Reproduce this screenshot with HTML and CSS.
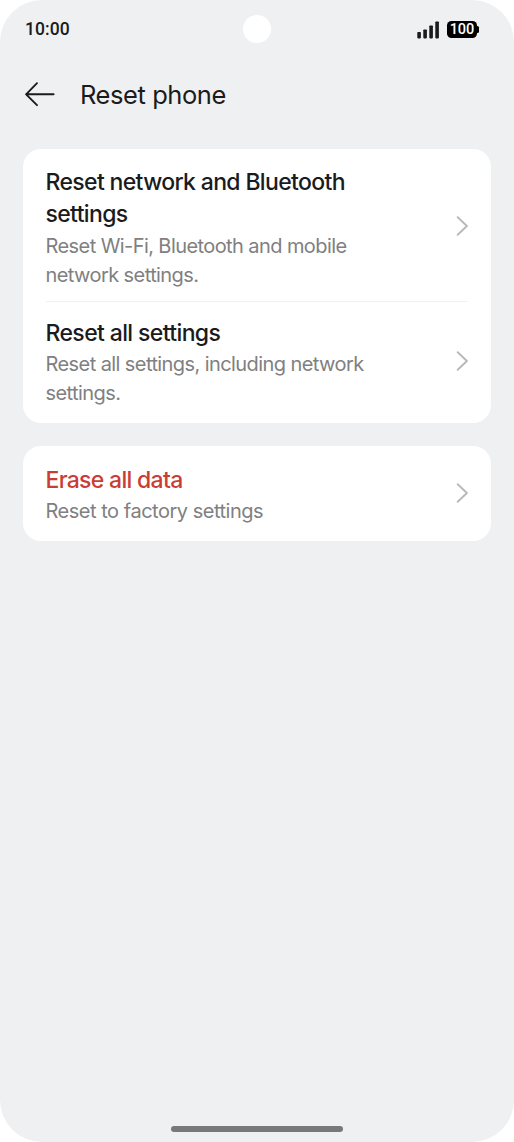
FILE: index.html
```html
<!DOCTYPE html>
<html lang="en">
<head>
<meta charset="utf-8">
<title>Reset phone</title>
<link rel="stylesheet" href="styles.css">
</head>
<body>
<div class="phone">
  <div class="status">
    <span class="time">10:00</span>
    <span class="camera"></span>
    <span class="indicators">
      <svg class="signal" width="23" height="18" viewBox="0 0 23 18" fill="#1a1b1c"><rect x="0.3" y="11" width="3.6" height="6.4" rx=".8"/><rect x="6.3" y="8.4" width="3.6" height="9" rx=".8"/><rect x="12.3" y="4.5" width="3.6" height="12.9" rx=".8"/><rect x="18.3" y="0.4" width="3.6" height="17" rx=".8"/></svg>
      <span class="battery">100</span>
    </span>
  </div>
  <header class="header">
    <svg class="back" width="32" height="26" viewBox="0 0 32 26" fill="none" stroke="#1a1b1c" stroke-width="1.9" stroke-linecap="round" stroke-linejoin="round"><path d="M13 2.2 2.1 13.3 13 24.2M2.1 13.3H29.6"/></svg>
    <h1 class="heading">Reset phone</h1>
  </header>
  <main class="cards">
    <section class="card">
      <div class="row row-first">
        <div class="text">
          <div class="title title-long">Reset network and Bluetooth<br>settings</div>
          <div class="sub">Reset Wi-Fi, Bluetooth and mobile<br>network settings.</div>
        </div>
        <svg class="chevron" width="12" height="20" viewBox="0 0 12 20"><path d="M1.7 1.2 10.9 10 1.7 18.8"/></svg>
      </div>
      <div class="divider"></div>
      <div class="row row-second">
        <div class="text">
          <div class="title">Reset all settings</div>
          <div class="sub">Reset all settings, including network<br>settings.</div>
        </div>
        <svg class="chevron" width="12" height="20" viewBox="0 0 12 20"><path d="M1.7 1.2 10.9 10 1.7 18.8"/></svg>
      </div>
    </section>
    <section class="card">
      <div class="row row-erase">
        <div class="text">
          <div class="title danger">Erase all data</div>
          <div class="sub sub-short">Reset to factory settings</div>
        </div>
        <svg class="chevron" width="12" height="20" viewBox="0 0 12 20"><path d="M1.7 1.2 10.9 10 1.7 18.8"/></svg>
      </div>
    </section>
  </main>
  <div class="home-bar"></div>
</div>
</body>
</html>
```
FILE: styles.css
```css
* { box-sizing: border-box; }
body { margin: 0; background: #fff; font-family: Inter, "Liberation Sans", sans-serif; color: #1a1b1c; }
.phone { display: flex; flex-direction: column; width: 514px; height: 1142px; background: #eff0f2; border-radius: 42px; overflow: hidden; }
.status { display: grid; grid-template-columns: 1fr 28px 1fr; align-items: center; height: 58px; padding: 0 25px; font-family: Roboto, sans-serif; }
.time { font-size: 17.5px; font-weight: 500; letter-spacing: .1px; line-height: 20px; }
.camera { width: 28px; height: 28px; border-radius: 50%; background: #fff; }
.indicators { display: flex; justify-content: flex-end; align-items: center; gap: 7px; padding: 1px 12px 0 0; }
.battery { position: relative; width: 30px; height: 17px; border-radius: 4.5px; background: #000; color: #fff; font-size: 14.5px; font-weight: 500; line-height: 18px; text-align: center; }
.battery::after { content: ""; position: absolute; right: -1.5px; top: 5px; width: 3px; height: 7px; border-radius: 1.5px; background: #000; }
.header { display: flex; align-items: center; gap: 24px; height: 74px; padding-left: 24px; }
.back { margin-bottom: 3px; }
.heading { margin: 0; font-size: 25.5px; font-weight: 400; letter-spacing: -.43px; line-height: 34px; }
.cards { display: flex; flex-direction: column; gap: 23px; padding: 16.5px 23px 0; }
.card { background: #fff; border-radius: 18px; padding: 0 23px 0 22.5px; }
.row { display: flex; align-items: center; justify-content: space-between; }
.row-first { padding: 17.5px 0 11.5px; }
.row-second { padding: 14.5px 0 15px; }
.row-erase { padding: 17.5px 0 14.5px; }
.title { font-size: 23px; font-weight: 500; letter-spacing: -.62px; line-height: 32px; white-space: nowrap; }
.sub { margin-top: 1.5px; font-size: 20px; font-weight: 400; letter-spacing: -.58px; line-height: 29px; color: #7f8081; white-space: nowrap; }
.title-long { letter-spacing: -.65px; }
.sub-short { letter-spacing: -.48px; }
.danger { color: #c93d35; letter-spacing: -.7px; }
.divider { height: 1px; background: #f1f1f1; }
.chevron { margin-bottom: 3px; fill: none; stroke: #b8b9ba; stroke-width: 1.9; stroke-linecap: round; stroke-linejoin: round; }
.home-bar { width: 172px; height: 6px; margin: auto auto 10px; border-radius: 3px; background: #777879; }
```
